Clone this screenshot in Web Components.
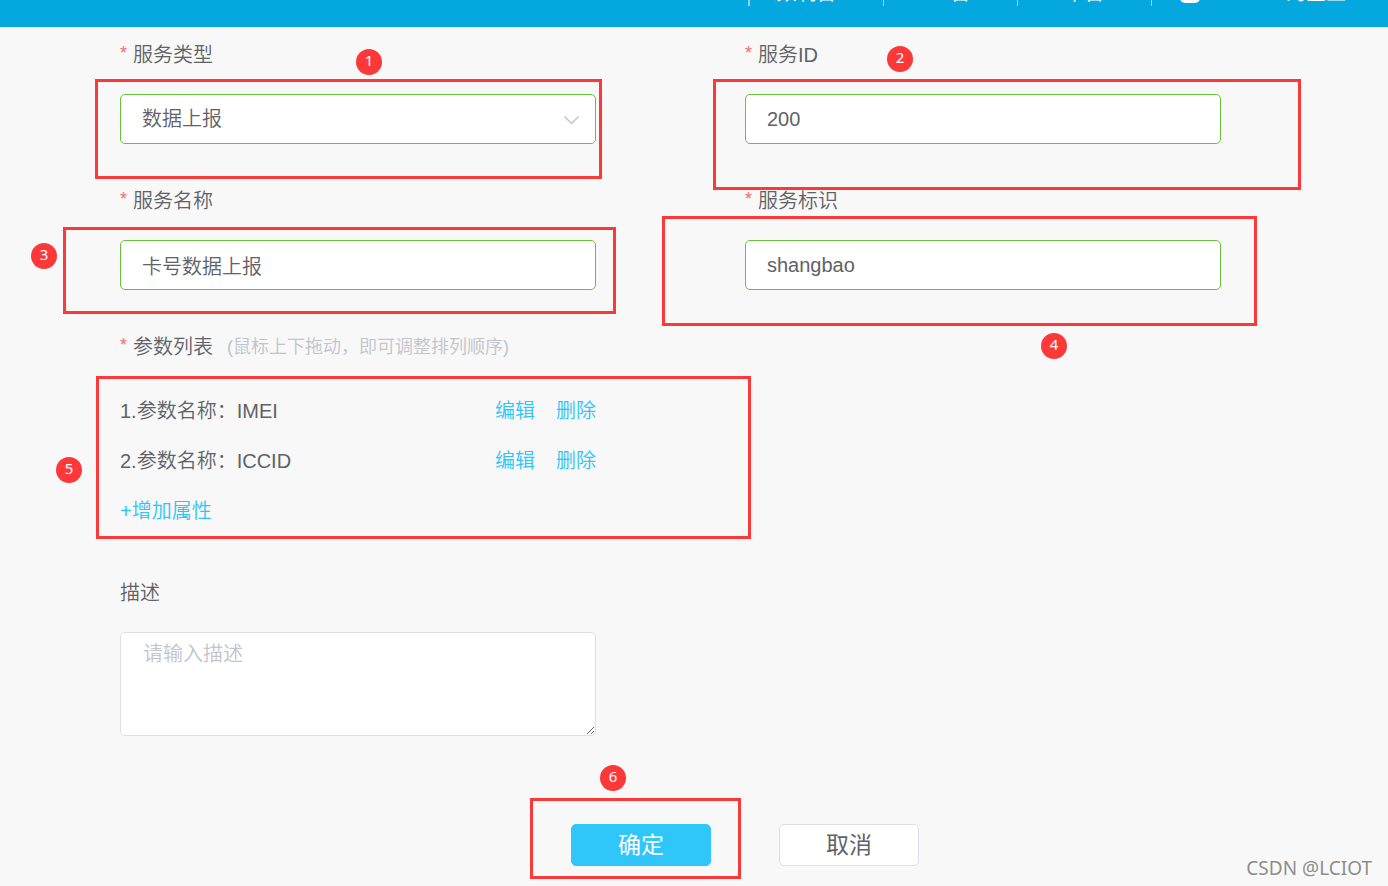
<!DOCTYPE html>
<html lang="zh-CN">
<head>
<meta charset="utf-8">
<meta name="viewport" content="width=device-width, initial-scale=1">
<title>服务配置</title>
<style>
  body {
    margin: 0;
    background: #f8f8f8;
    color: #606266;
    font: 350 20px/30px "Liberation Sans", "Noto Sans CJK SC", sans-serif;
  }
</style>
</head>
<body>
<service-page></service-page>

<script>
const define = (name, html, setup) => {
  const template = document.createElement('template');
  template.innerHTML = html;
  customElements.define(name, class extends HTMLElement {
    constructor() {
      super();
      this.attachShadow({ mode: 'open' }).append(template.content.cloneNode(true));
    }
    connectedCallback() {
      if (setup && !this.ready) {
        this.ready = true;
        setup(this, this.shadowRoot);
      }
    }
  });
};

/* Top navigation, scrolled almost out of view */
define('top-bar', `
  <style>
    :host { display: block; height: 27px; overflow: hidden; background: #04a8de; color: #fff; }
    nav { display: flex; justify-content: flex-end; align-items: flex-end; height: 6px; padding-right: 42px; }
    span { box-sizing: border-box; display: flex; justify-content: center; align-items: flex-end;
      width: 134px; height: 24px; padding-bottom: 1px; border-left: 1px solid #8fd6ef;
      font-size: 20px; line-height: 24px; font-weight: 400; white-space: nowrap; }
    span:first-child { border-left-width: 2px; width: 135px; padding-right: 20px; }
    span:nth-child(2) { padding-left: 20px; }
    span:last-child { width: 195px; padding-left: 28px; justify-content: space-between; }
    i { width: 20px; height: 20px; margin-bottom: 2px; border-radius: 5px; background: #fff; }
  </style>
  <nav><span>数制台</span><span>台</span><span>平台</span><span><i></i>的企业</span></nav>
`);

/* Numbered frame laid over the part of the form that it points at */
define('step-mark', `
  <style>
    :host { position: absolute; pointer-events: none; z-index: 1; }
    div { position: absolute; inset: 0; border: 3px solid #fd3838; }
    b { position: absolute; left: var(--x); top: var(--y); width: 26px; height: 26px; border-radius: 50%;
      background: #fd3838; color: #fff; text-align: center; font: 400 15px/22px "Noto Sans", sans-serif; }
  </style>
  <div></div><b><slot></slot></b>
`);

define('field-label', `
  <style>
    :host { display: flex; align-items: center; height: 30px; white-space: nowrap; }
    i { display: none; width: 13px; height: 30px; color: #f56c6c; font-style: normal; font-size: 18px; line-height: 26px; }
    :host([required]) i { display: block; }
    ::slotted(small) { margin-left: 14px; font-size: 18px; color: #c0c4cc; }
  </style>
  <i>*</i><slot></slot>
`);

const fieldStyle = `
  :host { display: block; position: relative; }
  .box { position: relative; margin-top: 24px; }
  input, select, textarea { display: block; box-sizing: border-box; width: 100%; height: 50px; margin: 0;
    padding: 0 21px; border: 1px solid #67c23a; border-radius: 5px; outline: 0; background: #fff;
    color: #606266; font: inherit; appearance: none; }
  textarea { height: 104px; padding: 6px 22px; border-color: #dcdfe6; resize: vertical; }
  ::placeholder { color: #c0c4cc; opacity: 1; }
  svg { position: absolute; right: 16px; top: 21px; pointer-events: none; }
`;

define('text-field', `
  <style>${fieldStyle}</style>
  <label for="c"><field-label required></field-label></label>
  <div class="box"><input id="c" type="text"></div>
  <slot></slot>
`, (host, root) => {
  root.querySelector('field-label').textContent = host.getAttribute('label');
  root.querySelector('input').value = host.getAttribute('value');
});

define('select-field', `
  <style>${fieldStyle}</style>
  <label for="c"><field-label required></field-label></label>
  <div class="box">
    <select id="c"><option></option></select>
    <svg width="17" height="11" viewBox="0 0 17 11" fill="none" stroke="#c0c4cc" stroke-width="1.5"><path d="M1.5 1.5 8.500 8.500 15.500 1.500"/></svg>
  </div>
  <slot></slot>
`, (host, root) => {
  root.querySelector('field-label').textContent = host.getAttribute('label');
  root.querySelector('option').textContent = host.getAttribute('value');
});

define('area-field', `
  <style>${fieldStyle}</style>
  <label for="c"><field-label></field-label></label>
  <div class="box"><textarea id="c"></textarea></div>
`, (host, root) => {
  root.querySelector('field-label').textContent = host.getAttribute('label');
  root.querySelector('textarea').placeholder = host.getAttribute('placeholder');
});

define('param-row', `
  <style>
    :host { display: flex; align-items: center; gap: 21px; height: 50px; }
    span { flex: 1; }
    a { color: #2fc3f7; text-decoration: none; }
  </style>
  <span><slot></slot></span><a href="#edit">编辑</a><a href="#delete">删除</a>
`);

define('param-list', `
  <style>
    :host { display: block; }
    .list { position: relative; margin-top: 24px; }
    .add { display: flex; align-items: center; height: 50px; color: #2fc3f7; text-decoration: none; }
  </style>
  <field-label required>参数列表<small>(鼠标上下拖动，即可调整排列顺序)</small></field-label>
  <div class="list">
    <param-row>1.参数名称：IMEI</param-row>
    <param-row>2.参数名称：ICCID</param-row>
    <a class="add" href="#add">+增加属性</a>
    <slot></slot>
  </div>
`);

define('form-button', `
  <style>
    :host { display: block; position: relative; }
    button { display: block; box-sizing: border-box; width: 140px; height: 42px; padding: 0;
      border: 1px solid #dcdfe6; border-radius: 5px; background: #fff; color: #606266;
      font: inherit; font-size: 23px; line-height: 40px; font-weight: 400; }
    :host([primary]) button { border-color: #2fc6f9; background: #2fc6f9; color: #fff; }
  </style>
  <button type="button"><slot></slot></button><slot name="mark"></slot>
`);

define('service-page', `
  <style>
    :host { display: block; position: relative; min-height: 100vh; overflow-x: hidden; }
    main { padding: 13px 0 20px; }
    .grid { display: grid; grid-template-columns: 1fr 1fr; gap: 42px 149px; padding: 0 167px 0 120px; }
    param-list, area-field { grid-column: 1; }
    .actions { display: flex; justify-content: center; gap: 68px; margin-top: 88px; padding-left: 102px; }
    footer { position: absolute; right: 16px; bottom: 4px; color: #8c8c8c; text-shadow: 1px 1px 0 #fff;
      font: 400 19px/28px "Noto Sans", sans-serif; }
  </style>
  <top-bar></top-bar>
  <main>
    <div class="grid">
      <select-field label="服务类型" value="数据上报">
        <step-mark style="inset:39px -6px -35px -25px;--x:261px;--y:-30px">1</step-mark>
      </select-field>
      <text-field label="服务ID" value="200">
        <step-mark style="inset:39px -80px -46px -32px;--x:174px;--y:-33px">2</step-mark>
      </text-field>
      <text-field label="服务名称" value="卡号数据上报">
        <step-mark style="inset:41px -20px -24px -57px;--x:-32px;--y:16px">3</step-mark>
      </text-field>
      <text-field label="服务标识" value="shangbao">
        <step-mark style="inset:30px -36px -36px -83px;--x:379px;--y:117px">4</step-mark>
      </text-field>
      <param-list>
        <step-mark style="inset:-10px -155px -3px -24px;--x:-40px;--y:81px">5</step-mark>
      </param-list>
      <area-field label="描述" placeholder="请输入描述"></area-field>
    </div>
    <div class="actions">
      <form-button primary>确定<step-mark slot="mark" style="inset:-26px -30px -13px -41px;--x:70px;--y:-33px">6</step-mark></form-button>
      <form-button>取消</form-button>
    </div>
  </main>
  <footer>CSDN @LCIOT</footer>
`);
</script>
</body>
</html>
